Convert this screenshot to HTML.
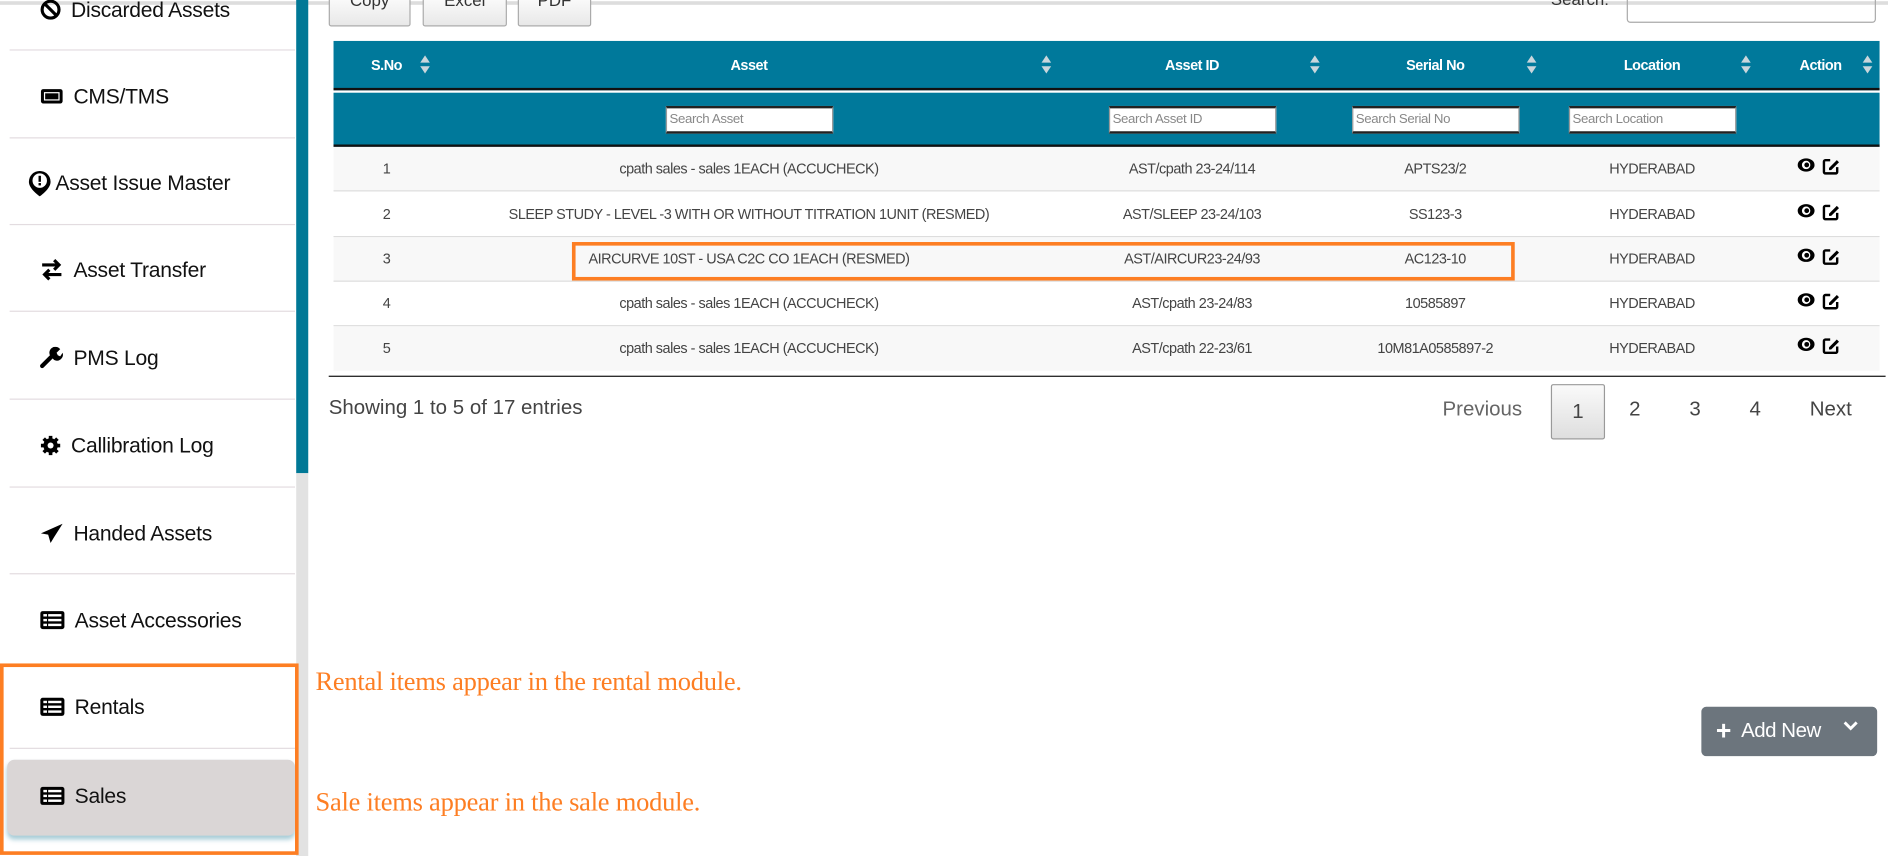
<!DOCTYPE html>
<html><head><meta charset="utf-8"><style>
*{box-sizing:border-box;margin:0;padding:0}
html,body{width:1888px;height:856px;overflow:hidden;background:#fff}
#w{position:absolute;left:0;top:0;width:1568px;height:711px;transform:scale(1.20408);transform-origin:0 0;font-family:"Liberation Sans",sans-serif;color:#222}
.a{position:absolute}
.topline{left:0;top:1px;width:1568px;height:3px;background:#ddd}
.side{left:8px;width:237px;height:1px;background:#e3dce0}
.it{left:0;width:245px;font-size:17.5px;color:#111;display:flex;align-items:center;height:30px;letter-spacing:-0.2px}
.it svg{margin-right:8px}
.btn{border:1px solid #aaa;border-radius:2px;background:linear-gradient(#fff,#e8e8e8);height:30px;top:-8px;font-size:14px;text-align:center;color:#333;line-height:14px;overflow:hidden}
.th{top:34px;height:41px;background:#00799b;color:#fff;font-weight:bold;font-size:12px;letter-spacing:-0.4px}
.hc{position:absolute;top:13px;transform:translateX(-50%)}
.arr{position:absolute;top:12px;width:8px;height:16px}
.arr:before{content:"";position:absolute;left:0;top:0;border-left:4px solid transparent;border-right:4px solid transparent;border-bottom:6px solid #c9d6dc}
.arr:after{content:"";position:absolute;left:0;top:9px;border-left:4px solid transparent;border-right:4px solid transparent;border-top:6px solid #c9d6dc}
.inp{position:absolute;top:88px;height:23px;width:139px;background:#fff;border:1px solid #999;border-top:2px solid #222;border-bottom:2px solid #222;font-size:11px;color:#888;padding:3px 2px;letter-spacing:-0.3px}
.row{left:277px;width:1284px;height:37px;border-bottom:1px solid #ddd;font-size:12px;color:#444;letter-spacing:-0.4px}
.c{position:absolute;top:11px;transform:translateX(-50%);white-space:nowrap}
.pg{font-size:17px;color:#444;top:330px}
.ann{font-family:"Liberation Serif",serif;color:#fd7e23;font-size:22px;left:262px;letter-spacing:-0.2px}
</style></head><body><div id="w">
<div class="a topline"></div>
<div class="a side" style="top:41px"></div>
<div class="a side" style="top:114px"></div>
<div class="a side" style="top:186px"></div>
<div class="a side" style="top:258px"></div>
<div class="a side" style="top:331px"></div>
<div class="a side" style="top:404px"></div>
<div class="a side" style="top:476px"></div>
<div class="a side" style="top:621px"></div>
<div class="a" style="left:246px;top:0;width:10px;height:393px;background:#007896"></div>
<div class="a" style="left:246px;top:393px;width:10px;height:318px;background:#e2e2e2"></div>

<div class="a it" style="top:-7px;left:33px"><svg width="18" height="18" viewBox="0 0 18 18"><circle cx="9" cy="9" r="7" fill="none" stroke="#000" stroke-width="2.6"/><path d="M4 4L14 14" stroke="#000" stroke-width="2.6"/></svg>Discarded Assets</div>
<div class="a it" style="top:65px;left:33px"><svg width="20" height="16" viewBox="0 0 20 16"><rect x="1" y="2" width="18" height="12" rx="2" fill="#000"/><rect x="4" y="5" width="12" height="6" fill="#000" stroke="#fff" stroke-width="1"/></svg>CMS/TMS</div>
<div class="a it" style="top:137px;left:22px"><svg width="22" height="24" viewBox="0 0 22 24" style="margin-right:2px"><path d="M11 2a9 9 0 0 1 9 9c0 6-9 12-9 12S2 17 2 11a9 9 0 0 1 9-9z" fill="#000"/><circle cx="11" cy="10" r="6" fill="#fff"/><rect x="10" y="6" width="2" height="5" fill="#000"/><rect x="10" y="12" width="2" height="2" fill="#000"/></svg>Asset Issue Master</div>
<div class="a it" style="top:209px;left:33px"><svg width="20" height="18" viewBox="0 0 20 18"><path d="M2 5h14M12 1l4 4-4 4M18 13H4M8 9l-4 4 4 4" stroke="#000" stroke-width="2.6" fill="none"/></svg>Asset Transfer</div>
<div class="a it" style="top:282px;left:33px"><svg width="20" height="18" viewBox="0 0 20 18"><path d="M2 16L10 8" stroke="#000" stroke-width="3.5" stroke-linecap="round"/><path d="M9 8a5 5 0 0 1 8-6l-3 3 1 2 2 1 2-3a5 5 0 0 1-7 6z" fill="#000"/></svg>PMS Log</div>
<div class="a it" style="top:355px;left:33px"><svg width="18" height="18" viewBox="0 0 18 18"><circle cx="9" cy="9" r="6" fill="#000"/><g stroke="#000" stroke-width="3"><path d="M9 1v16M1 9h16M3.3 3.3l11.4 11.4M14.7 3.3L3.3 14.7"/></g><circle cx="9" cy="9" r="2.5" fill="#fff"/></svg>Callibration Log</div>
<div class="a it" style="top:428px;left:33px"><svg width="20" height="18" viewBox="0 0 20 18"><path d="M19 1L1 9l6 1 2 7 3-5z" fill="#000"/></svg>Handed Assets</div>
<div class="a it" style="top:500px;left:33px"><svg width="21" height="16" viewBox="0 0 21 16"><rect x="0.5" y="0.5" width="20" height="15" rx="2" fill="#000"/><g fill="#fff"><rect x="3" y="3" width="3" height="2"/><rect x="7" y="3" width="11" height="2"/><rect x="3" y="7" width="3" height="2"/><rect x="7" y="7" width="11" height="2"/><rect x="3" y="11" width="3" height="2"/><rect x="7" y="11" width="11" height="2"/></g></svg>Asset Accessories</div>
<div class="a it" style="top:572px;left:33px"><svg width="21" height="16" viewBox="0 0 21 16"><rect x="0.5" y="0.5" width="20" height="15" rx="2" fill="#000"/><g fill="#fff"><rect x="3" y="3" width="3" height="2"/><rect x="7" y="3" width="11" height="2"/><rect x="3" y="7" width="3" height="2"/><rect x="7" y="7" width="11" height="2"/><rect x="3" y="11" width="3" height="2"/><rect x="7" y="11" width="11" height="2"/></g></svg>Rentals</div>
<div class="a" style="left:6px;top:631px;width:239px;height:63px;background:#dad6d6;border-radius:6px;box-shadow:0 3px 4px rgba(0,110,140,0.35)"></div>
<div class="a it" style="top:646px;left:33px"><svg width="21" height="16" viewBox="0 0 21 16"><rect x="0.5" y="0.5" width="20" height="15" rx="2" fill="#000"/><g fill="#fff"><rect x="3" y="3" width="3" height="2"/><rect x="7" y="3" width="11" height="2"/><rect x="3" y="7" width="3" height="2"/><rect x="7" y="7" width="11" height="2"/><rect x="3" y="11" width="3" height="2"/><rect x="7" y="11" width="11" height="2"/></g></svg>Sales</div>
<div class="a" style="left:0;top:551px;width:248px;height:159px;border:3px solid #fd7e23"></div>

<div class="a btn" style="left:273px;width:68px">Copy</div>
<div class="a btn" style="left:351px;width:70px">Excel</div>
<div class="a btn" style="left:430px;width:61px">PDF</div>
<div class="a" style="left:1288px;top:-9px;font-size:14px;color:#333">Search:</div>
<div class="a" style="left:1351px;top:-8px;width:207px;height:27px;border:1px solid #aaa;border-radius:3px"></div>

<div class="a th" style="left:277px;width:1284px;border-bottom:2px solid #111">
<span class="hc" style="left:44px">S.No</span><span class="arr" style="left:72px"></span>
<span class="hc" style="left:345px">Asset</span><span class="arr" style="left:588px"></span>
<span class="hc" style="left:713px">Asset ID</span><span class="arr" style="left:811px"></span>
<span class="hc" style="left:915px">Serial No</span><span class="arr" style="left:991px"></span>
<span class="hc" style="left:1095px">Location</span><span class="arr" style="left:1169px"></span>
<span class="hc" style="left:1235px">Action</span><span class="arr" style="left:1270px"></span>
</div>
<div class="a" style="left:277px;top:77px;width:1284px;height:45px;background:#00799b;border-bottom:2px solid #111"></div>
<div class="inp" style="left:553px">Search Asset</div>
<div class="inp" style="left:921px">Search Asset ID</div>
<div class="inp" style="left:1123px">Search Serial No</div>
<div class="inp" style="left:1303px">Search Location</div>

<div class="a row" style="top:122px;background:#f8f8f8"><span class="c" style="left:44px">1</span><span class="c" style="left:345px">cpath sales - sales 1EACH (ACCUCHECK)</span><span class="c" style="left:713px">AST/cpath 23-24/114</span><span class="c" style="left:915px">APTS23/2</span><span class="c" style="left:1095px">HYDERABAD</span></div>
<div class="a row" style="top:160px"><span class="c" style="left:44px">2</span><span class="c" style="left:345px">SLEEP STUDY - LEVEL -3 WITH OR WITHOUT TITRATION 1UNIT (RESMED)</span><span class="c" style="left:713px">AST/SLEEP 23-24/103</span><span class="c" style="left:915px">SS123-3</span><span class="c" style="left:1095px">HYDERABAD</span></div>
<div class="a row" style="top:197px;background:#f8f8f8"><span class="c" style="left:44px">3</span><span class="c" style="left:345px">AIRCURVE 10ST - USA C2C CO 1EACH (RESMED)</span><span class="c" style="left:713px">AST/AIRCUR23-24/93</span><span class="c" style="left:915px">AC123-10</span><span class="c" style="left:1095px">HYDERABAD</span></div>
<div class="a row" style="top:234px"><span class="c" style="left:44px">4</span><span class="c" style="left:345px">cpath sales - sales 1EACH (ACCUCHECK)</span><span class="c" style="left:713px">AST/cpath 23-24/83</span><span class="c" style="left:915px">10585897</span><span class="c" style="left:1095px">HYDERABAD</span></div>
<div class="a row" style="top:271px;background:#f8f8f8;border-bottom:none"><span class="c" style="left:44px">5</span><span class="c" style="left:345px">cpath sales - sales 1EACH (ACCUCHECK)</span><span class="c" style="left:713px">AST/cpath 22-23/61</span><span class="c" style="left:915px">10M81A0585897-2</span><span class="c" style="left:1095px">HYDERABAD</span></div>
<div class="a" style="left:273px;top:312px;width:1293px;height:1px;background:#111"></div>
<div class="a" style="left:475px;top:201px;width:783px;height:32px;border:3px solid #fd7e23"></div>

<svg class="a" style="left:1492px;top:130px" width="40" height="170" viewBox="0 0 40 170">
<defs><g id="ic"><ellipse cx="8" cy="7" rx="7" ry="5.5" fill="#000"/><circle cx="8" cy="7" r="3.5" fill="#fff"/><circle cx="8.5" cy="7" r="2" fill="#000"/>
<path d="M28 3h-4a1.2 1.2 0 0 0-1.2 1.2v8.6a1.2 1.2 0 0 0 1.2 1.2h8.6a1.2 1.2 0 0 0 1.2-1.2v-4" fill="none" stroke="#000" stroke-width="2"/><path d="M27 9.5l6.5-6.5 1.8 1.8-6.5 6.5h-1.8z" fill="#000"/></g></defs>
<use href="#ic" y="0"/><use href="#ic" y="38"/><use href="#ic" y="75"/><use href="#ic" y="112"/><use href="#ic" y="149"/></svg>

<div class="a" style="left:273px;top:329px;font-size:17px;color:#444">Showing 1 to 5 of 17 entries</div>
<div class="a pg" style="left:1198px;color:#666">Previous</div>
<div class="a" style="left:1288px;top:319px;width:45px;height:46px;border:1px solid #999;border-radius:2px;background:linear-gradient(#fafafa,#dedede);font-size:17px;color:#444;text-align:center;line-height:44px">1</div>
<div class="a pg" style="left:1353px">2</div>
<div class="a pg" style="left:1403px">3</div>
<div class="a pg" style="left:1453px">4</div>
<div class="a pg" style="left:1503px">Next</div>

<div class="a ann" style="top:553px">Rental items appear in the rental module.</div>
<div class="a ann" style="top:653px">Sale items appear in the sale module.</div>

<div class="a" style="left:1413px;top:587px;width:146px;height:41px;background:#6c757d;border-radius:4px;color:#fff;font-size:17px;line-height:40px;letter-spacing:-0.4px">
<span style="position:absolute;left:12px;font-size:22px;font-weight:bold">+</span><span style="position:absolute;left:33px">Add New</span>
<svg style="position:absolute;left:117px;top:11px" width="14" height="10" viewBox="0 0 14 10"><path d="M2 2l5 5 5-5" stroke="#fff" stroke-width="2.4" fill="none"/></svg></div>
</div></body></html>
